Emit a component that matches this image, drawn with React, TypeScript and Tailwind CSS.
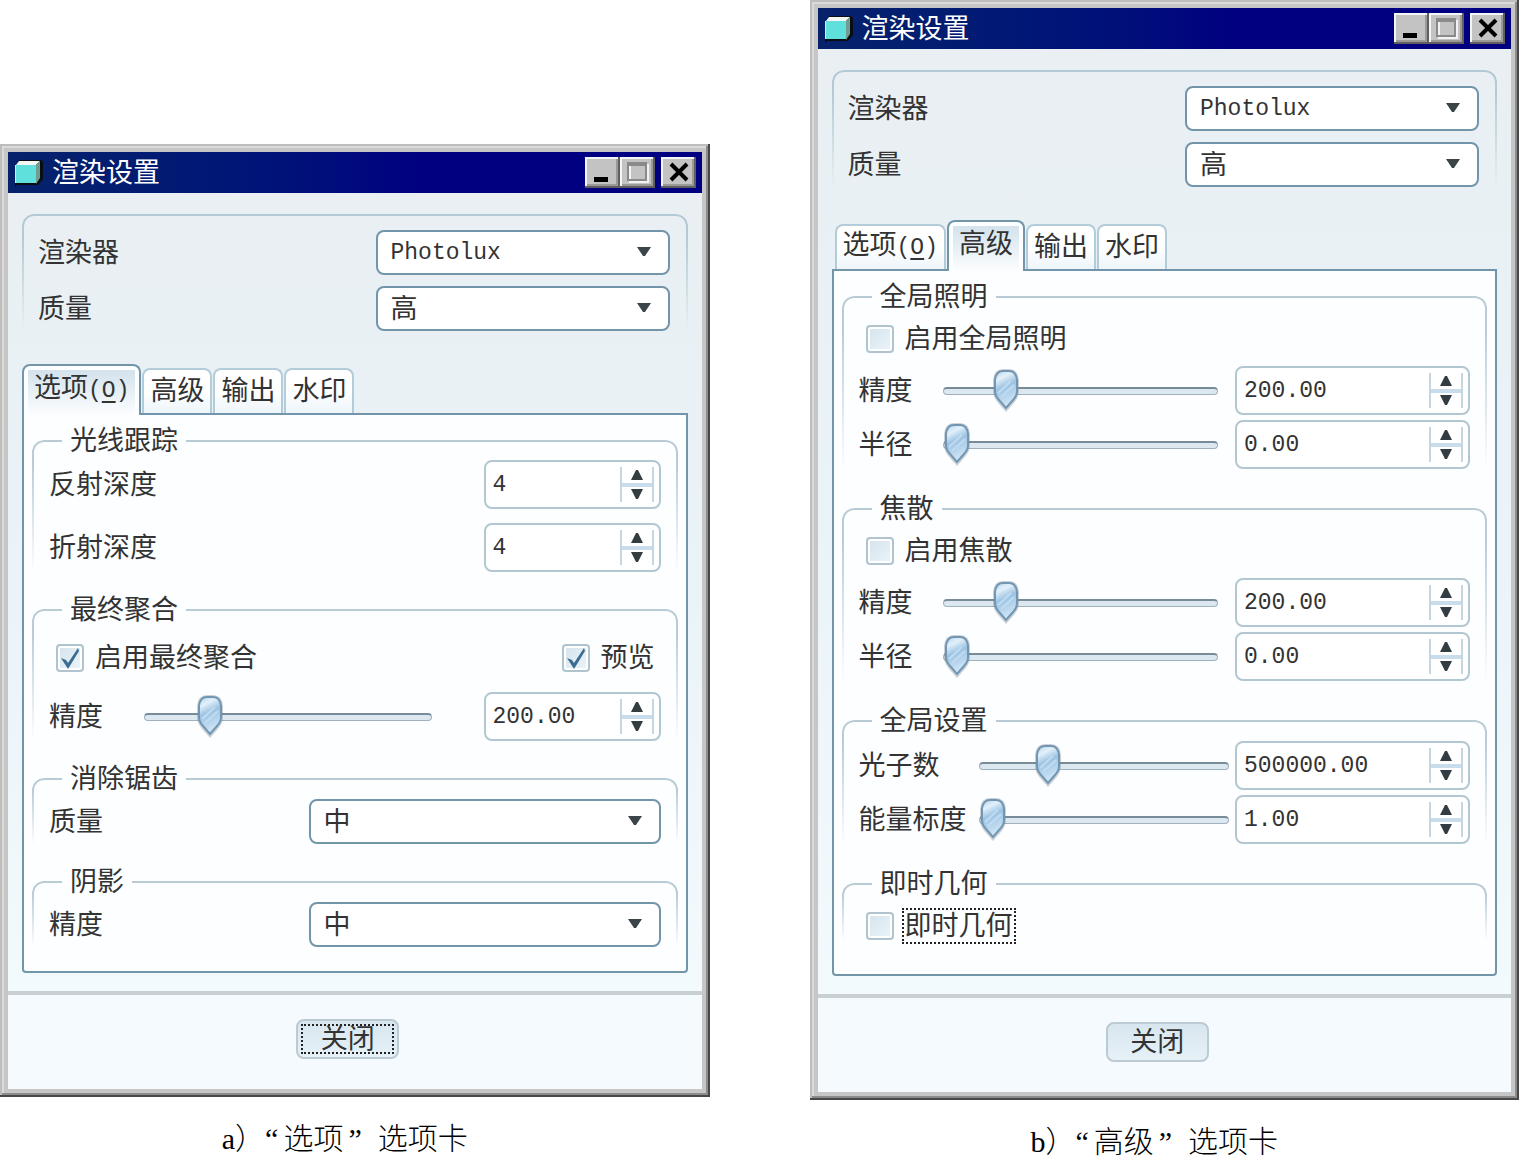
import { useId, useState, type ReactNode } from 'react';
import { clsx } from 'clsx';

type TabKey = 'options' | 'advanced' | 'output' | 'watermark';

const tabs: { key: TabKey; label: ReactNode }[] = [
  { key: 'options', label: <>选项<Mono>(<u className="underline-offset-4">O</u>)</Mono></> },
  { key: 'advanced', label: '高级' },
  { key: 'output', label: '输出' },
  { key: 'watermark', label: '水印' },
];

function Mono({ children }: { children: ReactNode }) {
  return <span className="font-['Liberation_Mono',monospace] text-[23px]">{children}</span>;
}

function AppIcon() {
  return (
    <svg viewBox="0 0 30 28" className="h-7 w-[30px]" aria-hidden="true">
      <path d="M5 1h22l2 2v17l-5 6H3l-2 2v-6z" fill="#0a0d12" />
      <path d="M2 6l3-4h21l-4 4z" fill="#f2f6f5" />
      <path d="M22 6l4-4v17l-4 6z" fill="#6f9c93" />
      <path d="M2 6h20v18H2z" fill="#5fe0dc" />
      <path d="M1 6h1v18H1z" fill="#c5f3f0" />
    </svg>
  );
}

function TitleButton({ label, className, children }: { label: string; className?: string; children: ReactNode }) {
  return (
    <button
      aria-label={label}
      className={clsx(
        'flex h-[31px] w-[35px] items-center justify-center bg-[#c3c3c3] shadow-[inset_-2px_-2px_0_#606060,inset_2px_2px_0_#f4f4f4,inset_-4px_-4px_0_#9a9a9a]',
        className,
      )}
    >
      <svg viewBox="0 0 35 31" className="h-full w-full" aria-hidden="true">
        {children}
      </svg>
    </button>
  );
}

function TitleBar() {
  return (
    <div className="flex h-[41px] items-center bg-linear-to-r from-[#07226b] to-[#000080] to-60% pr-[6px] pl-[6px]">
      <AppIcon />
      <h2 className="ml-2 flex-1 text-[27px] leading-7 text-white">渲染设置</h2>
      <TitleButton label="最小化">
        <path d="M9 20h14v5H9z" fill="#000" />
      </TitleButton>
      <TitleButton label="最大化">
        <path d="M10 8h18v17H10z" fill="none" stroke="#f2f2f2" strokeWidth="2" />
        <path d="M8 6h18v17H8z" fill="none" stroke="#8a8a8a" strokeWidth="2" />
        <path d="M7 7h20" stroke="#8a8a8a" strokeWidth="4" />
      </TitleButton>
      <TitleButton label="关闭窗口" className="ml-[6px]">
        <path d="M10 7l16 16M26 7L10 23" stroke="#000" strokeWidth="4" />
      </TitleButton>
    </div>
  );
}

interface SelectProps {
  label: string;
  value: string;
  options: string[];
  className: string;
}

function SelectRow({ label, value, options, className }: SelectProps) {
  const id = useId();
  return (
    <div className="flex items-center justify-between">
      <label htmlFor={id}>{label}</label>
      <div className={clsx('relative', className)}>
        <select
          id={id}
          defaultValue={value}
          className={clsx(
            'h-[45px] w-full appearance-none rounded-lg border-2 border-[#7295aa] bg-white pl-[13px] leading-7',
            value === 'Photolux' && "font-['Liberation_Mono',monospace] text-[23px]",
          )}
        >
          {options.map((option) => (
            <option key={option}>{option}</option>
          ))}
        </select>
        <svg viewBox="0 0 14 9" className="pointer-events-none absolute top-[17px] right-[19px] h-[9px] w-[14px]" aria-hidden="true">
          <path d="M0 0h14L8 9H6z" fill="#3b4448" />
        </svg>
      </div>
    </div>
  );
}

function Spinner({ id, value, onChange, className }: {
  id: string;
  value: string;
  onChange: (value: string) => void;
  className: string;
}) {
  const step = (delta: number) => {
    const decimals = value.includes('.') ? 2 : 0;
    onChange(Math.max(0, Number(value) + delta).toFixed(decimals));
  };

  return (
    <div className={clsx('flex h-[49px] shrink-0 rounded-lg border-2 border-[#b3c7d2] bg-white', className)}>
      <input
        id={id}
        value={value}
        onChange={(e) => onChange(e.target.value)}
        className="w-full min-w-0 flex-1 bg-transparent pl-[7px] font-['Liberation_Mono',monospace] text-[23px] outline-none"
      />
      <div className="my-[5px] mr-[5px] flex w-[34px] flex-col divide-y-4 divide-[#c9dceb] border-x-2 border-[#c3d6e2]">
        <button aria-label="增加" onClick={() => step(1)} className="flex flex-1 items-center justify-center">
          <svg viewBox="0 0 12 10" className="h-[10px] w-3" aria-hidden="true">
            <path d="M5 0h2l5 10H0z" fill="#333c40" />
          </svg>
        </button>
        <button aria-label="减少" onClick={() => step(-1)} className="flex flex-1 items-center justify-center">
          <svg viewBox="0 0 12 10" className="h-[10px] w-3" aria-hidden="true">
            <path d="M0 0h12L7 10H5z" fill="#333c40" />
          </svg>
        </button>
      </div>
    </div>
  );
}

function SpinnerRow({ label, initial }: { label: string; initial: string }) {
  const id = useId();
  const [value, setValue] = useState(initial);
  return (
    <div className="flex items-center justify-between">
      <label htmlFor={id}>{label}</label>
      <Spinner id={id} value={value} onChange={setValue} className="w-[177px]" />
    </div>
  );
}

function SliderThumb() {
  const id = useId();
  return (
    <svg viewBox="0 0 28 44" className="h-11 w-7" aria-hidden="true">
      <defs>
        <linearGradient id={id} x1="0" y1="0" x2="0.3" y2="1">
          <stop offset="0" stopColor="#b5d4ec" />
          <stop offset="0.25" stopColor="#e2f0fa" />
          <stop offset="0.5" stopColor="#9dc3e2" />
          <stop offset="1" stopColor="#cfe5f6" />
        </linearGradient>
      </defs>
      <path d="M3 12Q4 3 11 3h6q7 0 8 9v11q0 5-4 10l-7 8-7-8q-4-5-4-10z" fill="none" stroke="#6f7f8b" strokeOpacity="0.35" strokeWidth="4" />
      <path d="M3 12Q4 3 11 3h6q7 0 8 9v11q0 5-4 9l-7 8-7-8q-4-4-4-9z" fill={`url(#${id})`} stroke="#7296b2" strokeWidth="2" />
      <path d="M6 25L19 13M9 29L22 17" stroke="#bfdcf2" strokeWidth="2" />
    </svg>
  );
}

interface SliderRowProps {
  label: string;
  initial: string;
  max: number;
  labelClass: string;
  sliderClass: string;
  spinnerClass: string;
}

function SliderRow({ label, initial, max, labelClass, sliderClass, spinnerClass }: SliderRowProps) {
  const id = useId();
  const [value, setValue] = useState(initial);
  const ratio = Math.min(1, (Number(value) || 0) / max);

  return (
    <div className="flex items-center">
      <label htmlFor={id} className={clsx('shrink-0', labelClass)}>{label}</label>
      <div className={clsx('relative flex h-11 flex-1 items-center', sliderClass)}>
        <div className="h-2 w-full rounded-full border border-t-2 border-[#9fb1be] border-t-[#788b98] bg-[#dce8f0]" />
        <div className="absolute -top-px" style={{ left: `calc(${ratio} * (100% - 28px))` }}>
          <SliderThumb />
        </div>
        <input
          type="range"
          aria-label={label}
          min={0}
          max={max}
          value={Number(value) || 0}
          onChange={(e) => setValue(Number(e.target.value).toFixed(2))}
          className="absolute inset-0 h-full w-full opacity-0"
        />
      </div>
      <Spinner id={id} value={value} onChange={setValue} className={spinnerClass} />
    </div>
  );
}

function Checkbox({ label, initial = false, focused = false }: { label: string; initial?: boolean; focused?: boolean }) {
  const [checked, setChecked] = useState(initial);
  return (
    <label className="flex h-7 items-center">
      <span className="relative h-7 w-7">
        <input
          type="checkbox"
          checked={checked}
          onChange={(e) => setChecked(e.target.checked)}
          className="block h-7 w-7 appearance-none rounded-sm border-2 border-[#b0c4cf] bg-linear-to-br from-[#d5e3ec] to-[#ebf5fa] shadow-[inset_0_0_0_2px_#ffffff]"
        />
        {checked && (
          <svg viewBox="0 0 28 28" className="pointer-events-none absolute inset-0" aria-hidden="true">
            <path d="M5 14l5 2 2 3L22 4l1 3-11 18z" fill="#3c6d91" />
          </svg>
        )}
      </span>
      <span
        className={clsx(
          'ml-2 border-2 px-px leading-8',
          focused ? 'border-dotted border-[#222]' : 'border-transparent',
        )}
      >
        {label}
      </span>
    </label>
  );
}

function Group({ title, className, children }: { title: string; className: string; children: ReactNode }) {
  return (
    <fieldset className="relative min-w-0">
      <legend className="relative z-10 ml-[30px] h-7 bg-[#fcfeff] px-2 leading-7">{title}</legend>
      {/* frame line runs through the middle of the legend and fades out downwards */}
      <div className="pointer-events-none absolute inset-x-0 -top-[15px] bottom-0 rounded-t-xl border-2 border-b-0 border-[#b9ccd6] mask-b-from-20% mask-b-to-100%" />
      <div className={clsx('relative flex flex-col px-[17px]', className)}>{children}</div>
    </fieldset>
  );
}

function OptionsPanel() {
  return (
    <div className="flex flex-col gap-6 pb-6">
      <Group title="光线跟踪" className="gap-[14px] pt-[5px]">
        <SpinnerRow label="反射深度" initial="4" />
        <SpinnerRow label="折射深度" initial="4" />
      </Group>
      <Group title="最终聚合" className="gap-5 pt-5">
        <div className="flex justify-between pr-[3px] pl-[7px]">
          <Checkbox label="启用最终聚合" initial />
          <Checkbox label="预览" initial />
        </div>
        <SliderRow label="精度" initial="200.00" max={1000} labelClass="w-[95px]" sliderClass="mr-[52px]" spinnerClass="w-[177px]" />
      </Group>
      <Group title="消除锯齿" className="pt-[6px]">
        <SelectRow label="质量" value="中" options={['低', '中', '高']} className="w-[352px]" />
      </Group>
      <Group title="阴影" className="pt-[6px]">
        <SelectRow label="精度" value="中" options={['低', '中', '高']} className="w-[352px]" />
      </Group>
    </div>
  );
}

function AdvancedPanel() {
  const precision = { labelClass: 'w-[84px]', sliderClass: 'mr-[17px]', spinnerClass: 'w-[235px]' };
  const global = { labelClass: 'w-[120px]', sliderClass: 'mr-[6px]', spinnerClass: 'w-[235px]' };

  return (
    <div className="flex flex-col gap-[26px] pb-[34px]">
      {[
        { title: '全局照明', check: '启用全局照明' },
        { title: '焦散', check: '启用焦散' },
      ].map(({ title, check }) => (
        <Group key={title} title={title} className="gap-[5px] pt-[14px]">
          <div className="mb-2 pl-[7px]">
            <Checkbox label={check} />
          </div>
          <SliderRow label="精度" initial="200.00" max={1000} {...precision} />
          <SliderRow label="半径" initial="0.00" max={100} {...precision} />
        </Group>
      ))}
      <Group title="全局设置" className="gap-[5px] pt-[6px]">
        <SliderRow label="光子数" initial="500000.00" max={2000000} {...global} />
        <SliderRow label="能量标度" initial="1.00" max={1000} {...global} />
      </Group>
      <Group title="即时几何" className="pt-[14px]">
        <div className="pl-[7px]">
          <Checkbox label="即时几何" focused />
        </div>
      </Group>
    </div>
  );
}

function TabButton({ active, label, onClick }: { active: boolean; label: ReactNode; onClick: () => void }) {
  return (
    <button
      role="tab"
      aria-selected={active}
      onClick={onClick}
      className={clsx(
        'rounded-t-lg border-2 border-b-0 leading-8 whitespace-nowrap',
        active
          ? 'relative z-10 -mb-[2px] h-[51px] border-[#7295aa] bg-[#fcfeff] px-1 pt-1 first:-ml-[3px]'
          : 'h-[45px] border-[#b3ccda] bg-linear-to-b from-white via-white to-[#edf5fa] px-[6px] pb-[2px]',
      )}
    >
      {active ? (
        <span className="block h-full bg-linear-to-b from-[#d3e2ec] to-[#fcfeff] px-[6px] pt-[2px]">{label}</span>
      ) : (
        label
      )}
    </button>
  );
}

function RenderDialog({ initialTab, closeFocused = false }: { initialTab: TabKey; closeFocused?: boolean }) {
  const [tab, setTab] = useState<TabKey>(initialTab);

  return (
    <section className="bg-[#c6c6c6] p-2 font-['Liberation_Sans','Noto_Sans_CJK_SC',sans-serif] text-[27px] leading-7 text-[#333] shadow-[inset_-2px_-2px_0_#484848,inset_2px_2px_0_#bdbdbd,inset_-4px_-4px_0_#8c8c8c,inset_4px_4px_0_#dcdad8]">
      <TitleBar />
      <div className="bg-linear-to-b from-[#e9eff3] via-[#eaf3f8] to-[#f3fafe] px-[14px] pt-[21px] pb-[18px]">
        <div className="relative mb-[33px] flex flex-col gap-[11px] pt-4 pr-[18px] pl-4">
          <div className="pointer-events-none absolute inset-0 rounded-t-xl border-2 border-b-0 border-[#b3c9d4] mask-b-from-20% mask-b-to-100%" />
          <SelectRow label="渲染器" value="Photolux" options={['Photolux', 'PhotoRender']} className="w-[294px]" />
          <SelectRow label="质量" value="高" options={['低', '中', '高']} className="w-[294px]" />
        </div>
        <div role="tablist" className="flex h-[49px] items-end gap-px pl-[3px]">
          {tabs.map(({ key, label }) => (
            <TabButton key={key} active={tab === key} label={label} onClick={() => setTab(key)} />
          ))}
        </div>
        <div role="tabpanel" className="rounded-b-sm border-2 border-[#7295aa] bg-[#fcfeff] px-2 pt-3">
          {tab === 'options' && <OptionsPanel />}
          {tab === 'advanced' && <AdvancedPanel />}
        </div>
      </div>
      <div className="flex justify-center border-t-4 border-[#c9d0d4] bg-[#f4fafe] pt-6 pr-[14px] pb-[30px]">
        <button className="h-10 w-[103px] rounded-lg border-2 border-[#bccad3] bg-linear-to-b from-[#d8e6ef] to-[#e6f1f7] p-[3px]">
          <span
            className={clsx(
              'flex h-full items-center justify-center',
              closeFocused && 'border-2 border-dotted border-[#222]',
            )}
          >
            关闭
          </span>
        </button>
      </div>
    </section>
  );
}

function Caption({ mark, name }: { mark: string; name: string }) {
  return (
    <figcaption className="mt-[26px] pr-5 text-center font-['Liberation_Serif','Noto_Sans_CJK_SC',serif] text-[30px] leading-8 font-light text-black">
      {mark}）“<span className="mx-[5px]">{name}</span>”<span className="ml-4">选项卡</span>
    </figcaption>
  );
}

export default function App() {
  return (
    <main className="grid grid-cols-2 items-start gap-x-[100px] bg-white">
      <figure className="pt-36">
        <RenderDialog initialTab="options" closeFocused />
        <Caption mark="a" name="选项" />
      </figure>
      <figure>
        <RenderDialog initialTab="advanced" />
        <Caption mark="b" name="高级" />
      </figure>
    </main>
  );
}
